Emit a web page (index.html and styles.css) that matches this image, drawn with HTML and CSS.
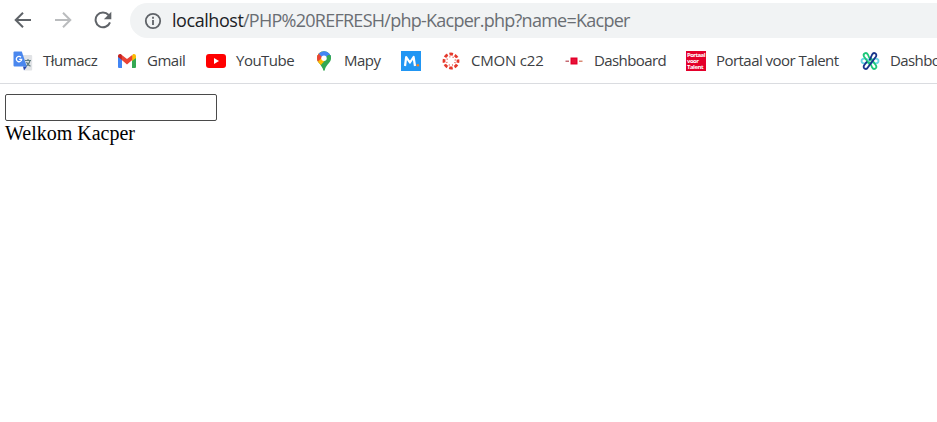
FILE: index.html
```
<!DOCTYPE html>
<html lang="pl">
<head>
<meta charset="utf-8">
<title>localhost</title>
<link rel="stylesheet" href="styles.css">
</head>
<body>
<header class="browser">
  <div class="toolbar">
    <nav class="controls">
      <svg width="18" height="18" viewBox="0 0 18 18" fill="none" stroke="#5f6368" stroke-width="2"><path d="M17 9H2M9 1.7 1.7 9 9 16.3"/></svg>
      <svg width="18" height="18" viewBox="0 0 18 18" fill="none" stroke="#babcbe" stroke-width="2"><path d="M1 9h15M9 1.7 16.3 9 9 16.3"/></svg>
      <svg width="18" height="18" viewBox="0 0 18 18"><path d="M14.6 4A7.4 7.4 0 1 0 16 11.3" fill="none" stroke="#5f6368" stroke-width="2"/><path d="M17.3.8v7.4H9.9z" fill="#5f6368"/></svg>
    </nav>
    <div class="address">
      <svg width="18" height="18" viewBox="0 0 18 18"><circle cx="9" cy="9" r="7.2" fill="none" stroke="#5f6368" stroke-width="1.8"/><path d="M8.1 8h1.8v5H8.1zM8.1 4.8h1.8v1.9H8.1z" fill="#5f6368"/></svg>
      <span class="url"><span class="host">localhost</span><span class="path">/PHP%20REFRESH/php-Kacper.php?name=Kacper</span></span>
    </div>
  </div>
  <nav class="bookmarks">
    <a class="bookmark"><svg viewBox="0 0 20 20"><path d="M7 4h11.200q1 0 1 1v13.500q0 1-1 1H12z" fill="#e1e3e6"/><path d="M12 9.500h6M15 8v1.500M17 9.500q-.8 4-4.500 6M13.500 11q1 2.700 4 4.300" fill="none" stroke="#607d80" stroke-width="1.200"/><path d="m10 15.500 4 0-3 4z" fill="#2848b0"/><path d="M1.500.5h7.300l5 15H1.500q-1 0-1-1v-13q0-1 1-1z" fill="#4a87ee"/><path d="M8 6.200A2.700 2.700 0 1 0 8.700 8.300H6.200" fill="none" stroke="#fff" stroke-width="1.300"/></svg><span class="label translate">Tłumacz</span></a>
    <a class="bookmark"><svg viewBox="0 0 20 20"><path d="M1 5v11q0 1 1 1h3V8z" fill="#4285f4"/><path d="M15 8v9h3q1 0 1-1V5z" fill="#34a853"/><path d="M15 5v5l4-3V5.200c0-2-2-2.700-3.300-1.700z" fill="#fbbc04"/><path d="M1 5.200C1 3.200 3 2.500 4.300 3.500L5 4v5L1 6z" fill="#c5221f"/><path d="m4.800 4 5.200 3.900L15.200 4v5L10 13.500 4.800 9z" fill="#ea4335"/></svg><span class="label gmail">Gmail</span></a>
    <a class="bookmark"><svg viewBox="0 0 20 20"><rect y="3" width="20" height="14" rx="3" fill="#f00"/><path d="m8 7 5 3-5 3z" fill="#fff"/></svg><span class="label youtube">YouTube</span></a>
    <a class="bookmark"><svg viewBox="0 0 20 20"><clipPath id="pin"><path d="M10 .3A7 7 0 0 0 3 7.300C3 12 8 13.500 9.200 19q.8 1.700 1.600 0C12 13.500 17 12 17 7.300A7 7 0 0 0 10 .3"/></clipPath><g clip-path="url(#pin)"><path d="M0 0h20v20H0z" fill="#34a853"/><path d="M0 0h8l2 7-6 5H0z" fill="#fbbc04"/><path d="M0 3 5 2l5 5-6 4.500H0z" fill="#ea4335"/><path d="M4 2 8 0h12v3l-9 6z" fill="#4285f4"/><path d="m5 14 9-10 3 0v3l-8 10z" fill="#34a853"/><path d="m3.500 11 4-4 3 3-4.500 5z" fill="#fbbc04"/></g><circle cx="10" cy="7.200" r="2.700" fill="#fff"/></svg><span class="label maps">Mapy</span></a>
    <a class="bookmark"><svg viewBox="0 0 20 20"><path d="M0 0h20v20H0z" fill="#2196f3"/><path d="M4 15 5.200 6l3.700 5.500L12.600 6 14 15" fill="none" stroke="#fff" stroke-width="2.200" stroke-linejoin="round"/><circle cx="16.800" cy="14.200" r="1.300" fill="#f58220"/></svg></a>
    <a class="bookmark"><svg viewBox="0 0 20 20" fill="none" stroke="#e5392c"><circle cx="10" cy="10" r="7" stroke-width="2.800" stroke-dasharray="3.600 1.898" stroke-dashoffset="1.800"/><circle cx="10" cy="10" r="4.300" stroke-width="1.200" stroke-dasharray="1 2.377" stroke-dashoffset="2.200"/></svg><span class="label canvas">CMON c22</span></a>
    <a class="bookmark"><svg viewBox="0 0 20 20"><path d="M6.500 6.500h7v7h-7z" fill="#e4002b"/><path d="M8 9h4M8 11h4" stroke="#e93d58" stroke-width=".6"/><path d="M1.500 9.500h3.500v1.500H1.500z" fill="#c56a73"/><path d="M15 9.500h3.500v1.500H15z" fill="#d98a75"/></svg><span class="label dash">Dashboard</span></a>
    <a class="bookmark"><svg class="portal-icon" viewBox="0 0 20 20"><path d="M0 0h20v20H0z" fill="#e4002b"/><text x="1" y="6.300" textLength="18.500">Portaal</text><text x="1" y="12" textLength="12">voor</text><text x="1" y="18" textLength="16.500">Talent</text></svg><span class="label portal">Portaal voor Talent</span></a>
    <a class="bookmark"><svg viewBox="0 0 20 20" fill="none" stroke-width="1.800"><path d="M9 10.500C6 13 1.500 13 1.500 10S6 7 9 9.500M11 9.500C14 7 18.500 7 18.500 10s-4.500 3-7.500.5" stroke="#69d5e5"/><path d="M10.500 9.500 7.800 3.500C6.300.7 2.500 2.500 4 5.500l6 8.500M9.500 10.500l2.700 6c1.500 2.800 5.300 1 3.800-2L10 6" stroke="#1cc779"/><path d="m9.500 9.500 2.700-6c1.500-2.800 5.300-1 3.800 2l-8.200 11c-1.500 2.800-5.300 1-3.800-2L7 10.500" stroke="#17338b"/></svg><span class="label dash">Dashboard</span></a>
  </nav>
</header>
<main class="page">
  <input class="name" type="text">
  <div class="welcome">Welkom Kacper</div>
</main>
</body>
</html>
```

FILE: styles.css
```
body { margin: 0; background: #fff; overflow: hidden; }
.browser { height: 83px; border-bottom: 1px solid #dadce0; font-family: "Open Sans", "Noto Sans", sans-serif; }
.toolbar { display: flex; height: 41px; padding-left: 14px; }
.controls { display: flex; gap: 22px; align-items: center; height: 40px; width: 116px; }
.address { display: flex; flex: 1; align-items: center; gap: 10px; box-sizing: border-box; height: 35px; margin-top: 3px; padding-left: 14px; border-radius: 18px 0 0 18px; background: #f1f3f4; }
.url { display: flex; padding-bottom: 2px; font-size: 18px; line-height: 24px; white-space: nowrap; }
.host { width: 71px; color: #202124; letter-spacing: -0.45px; }
.path { color: #6a6e73; letter-spacing: -0.74px; }
.bookmarks { display: flex; align-items: center; gap: 20px; height: 40px; padding-left: 13px; }
.bookmark { display: flex; flex: none; align-items: center; gap: 10px; color: #3c4043; }
.bookmark svg { width: 20px; height: 20px; }
.label { padding-bottom: 2px; font-size: 15px; line-height: 20px; white-space: nowrap; letter-spacing: -0.5px; }
.translate { width: 54px; }
.gmail { width: 39px; }
.youtube { width: 58px; }
.maps { width: 37px; }
.canvas { width: 73px; letter-spacing: -0.2px; }
.dash { width: 72px; letter-spacing: -0.6px; }
.portal { width: 124px; letter-spacing: -0.54px; }
.portal-icon text { fill: #fff; font: bold 6px "Open Sans", sans-serif; letter-spacing: 0; }
.page { padding: 10px 5px; font: 20px/25px "Liberation Serif", serif; color: #000; }
.name { display: block; box-sizing: border-box; width: 212px; height: 27px; margin: 0; border: 1px solid #4a4a4a; border-radius: 2px; background: #fff; }
```
